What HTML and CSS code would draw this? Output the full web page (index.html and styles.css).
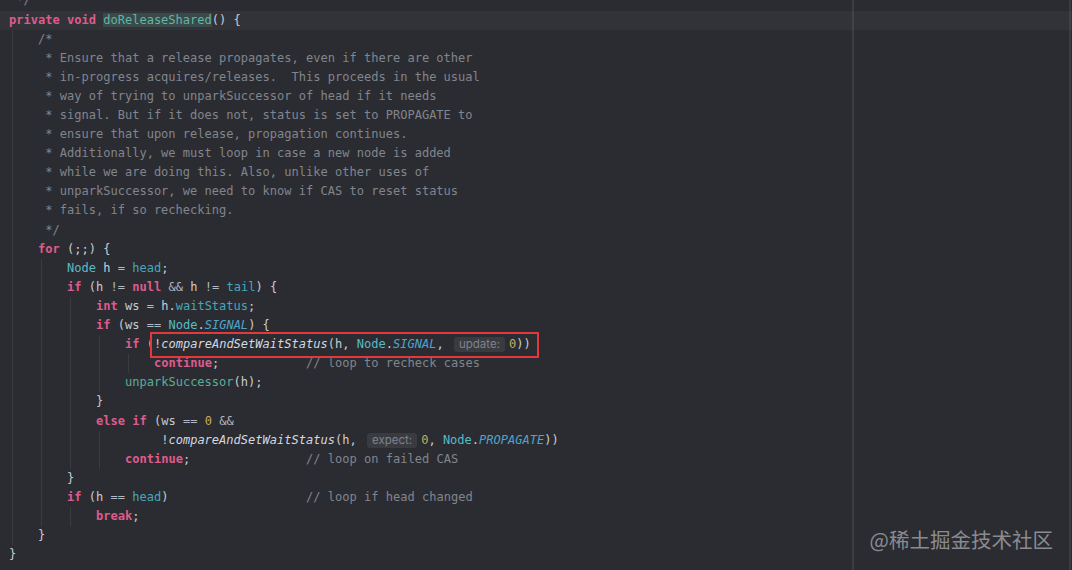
FILE: index.html
```html
<!DOCTYPE html>
<html>
<head>
<meta charset="utf-8">
<link rel="stylesheet" href="styles.css">
</head>
<body>
<div class="editor">
  <div class="code">
<div class="ln"><span class="cm"> */</span></div>
<div class="ln cur"><span class="k">private void</span> <span class="fn">doReleaseShared</span>() {</div>
<div class="ln"><span class="g">    </span><span class="cm">/*</span></div>
<div class="ln"><span class="g">    </span><span class="cm"> * Ensure that a release propagates, even if there are other</span></div>
<div class="ln"><span class="g">    </span><span class="cm"> * in-progress acquires/releases.  This proceeds in the usual</span></div>
<div class="ln"><span class="g">    </span><span class="cm"> * way of trying to unparkSuccessor of head if it needs</span></div>
<div class="ln"><span class="g">    </span><span class="cm"> * signal. But if it does not, status is set to PROPAGATE to</span></div>
<div class="ln"><span class="g">    </span><span class="cm"> * ensure that upon release, propagation continues.</span></div>
<div class="ln"><span class="g">    </span><span class="cm"> * Additionally, we must loop in case a new node is added</span></div>
<div class="ln"><span class="g">    </span><span class="cm"> * while we are doing this. Also, unlike other uses of</span></div>
<div class="ln"><span class="g">    </span><span class="cm"> * unparkSuccessor, we need to know if CAS to reset status</span></div>
<div class="ln"><span class="g">    </span><span class="cm"> * fails, if so rechecking.</span></div>
<div class="ln"><span class="g">    </span><span class="cm"> */</span></div>
<div class="ln"><span class="g">    </span><span class="k">for</span> (;;) {</div>
<div class="ln"><span class="g">    </span><span class="g">    </span><span class="t">Node</span> h <span class="op">=</span> <span class="f">head</span>;</div>
<div class="ln"><span class="g">    </span><span class="g">    </span><span class="k">if</span> (h <span class="op">!=</span> <span class="k">null</span> <span class="op">&amp;&amp;</span> h <span class="op">!=</span> <span class="f">tail</span>) {</div>
<div class="ln"><span class="g">    </span><span class="g">    </span><span class="g">    </span><span class="k">int</span> ws <span class="op">=</span> h.<span class="f">waitStatus</span>;</div>
<div class="ln"><span class="g">    </span><span class="g">    </span><span class="g">    </span><span class="k">if</span> (ws <span class="op">==</span> <span class="t">Node</span>.<span class="c">SIGNAL</span>) {</div>
<div class="ln"><span class="g">    </span><span class="g">    </span><span class="g">    </span><span class="g">    </span><span class="k">if</span> (<span class="mark">!<span class="s">compareAndSetWaitStatus</span>(h, <span class="t">Node</span>.<span class="c">SIGNAL</span>, <span class="h">update:</span><span class="n">0</span>))</span></div>
<div class="ln"><span class="g">    </span><span class="g">    </span><span class="g">    </span><span class="g">    </span><span class="g">    </span><span class="k">continue</span>;            <span class="cm">// loop to recheck cases</span></div>
<div class="ln"><span class="g">    </span><span class="g">    </span><span class="g">    </span><span class="g">    </span><span class="m">unparkSuccessor</span>(h);</div>
<div class="ln"><span class="g">    </span><span class="g">    </span><span class="g">    </span>}</div>
<div class="ln"><span class="g">    </span><span class="g">    </span><span class="g">    </span><span class="k">else if</span> (ws <span class="op">==</span> <span class="n">0</span> <span class="op">&amp;&amp;</span></div>
<div class="ln"><span class="g">    </span><span class="g">    </span><span class="g">    </span><span class="g">    </span>     !<span class="s">compareAndSetWaitStatus</span>(h, <span class="h">expect:</span><span class="n">0</span>, <span class="t">Node</span>.<span class="c">PROPAGATE</span>))</div>
<div class="ln"><span class="g">    </span><span class="g">    </span><span class="g">    </span><span class="g">    </span><span class="k">continue</span>;                <span class="cm">// loop on failed CAS</span></div>
<div class="ln"><span class="g">    </span><span class="g">    </span>}</div>
<div class="ln"><span class="g">    </span><span class="g">    </span><span class="k">if</span> (h <span class="op">==</span> <span class="f">head</span>)                   <span class="cm">// loop if head changed</span></div>
<div class="ln"><span class="g">    </span><span class="g">    </span><span class="g">    </span><span class="k">break</span>;</div>
<div class="ln"><span class="g">    </span>}</div>
<div class="ln">}</div>
  </div>
  <div class="wm">@稀土掘金技术社区</div>
</div>
</body>
</html>
```
FILE: styles.css
```css
html, body {
  margin: 0;
  padding: 0;
}
body {
  background: #2b2c31;
  overflow: hidden;
}
.editor {
  position: relative;
  height: 570px;
  overflow: hidden;
  background-color: #2b2c31;
  background-image: linear-gradient(90deg,
    transparent 852px, #3b3d43 852px, #3b3d43 854px, transparent 854px,
    transparent 1069px, #393b41 1069px, #393b41 1071px, transparent 1071px);
}
.code {
  margin-top: -8.55px;
  font-family: "DejaVu Sans Mono", "Liberation Mono", monospace;
  font-size: 12.04px;
  color: #c9ccd3;
}
.ln {
  height: 19.1px;
  line-height: 19.1px;
  white-space: pre;
  padding-left: 9px;
}
.cur {
  background: rgba(255, 255, 255, 0.035);
}
.g {
  display: inline-block;
  height: 19.1px;
  vertical-align: top;
  background: linear-gradient(90deg, transparent 3px, #3a3c41 3px, #3a3c41 4px, transparent 4px);
}
.k {
  color: #de5b8d;
  font-weight: bold;
}
.fn {
  color: #62b6a3;
  background: #3a4a4a;
}
.t {
  color: #56bcc8;
}
.f {
  color: #45a7bd;
}
.c {
  color: #4ea4cc;
  font-style: italic;
}
.s {
  color: #d4d8e0;
  font-style: italic;
}
.m {
  color: #5aae9c;
}
.n {
  color: #c9ab5e;
}
.op {
  color: #b4b8c0;
}
.cm {
  color: #81858e;
}
.h {
  display: inline-block;
  font-family: "Inter", "Liberation Sans", sans-serif;
  font-size: 11.5px;
  line-height: 15px;
  padding: 0 5px;
  margin: 0 4px 0 3px;
  background: #393b41;
  color: #7f838b;
  border-radius: 3px;
  vertical-align: 0;
  font-style: normal;
  font-weight: normal;
}
.mark {
  padding: 1px 4px 3px 0;
  margin-right: -4px;
  outline: 2.5px solid #e23a3c;
  outline-offset: 2px;
}
.wm {
  position: absolute;
  right: 19px;
  bottom: 19px;
  font-family: "Noto Sans CJK SC", sans-serif;
  font-size: 20.5px;
  line-height: 24px;
  color: #8a8b90;
}
```
